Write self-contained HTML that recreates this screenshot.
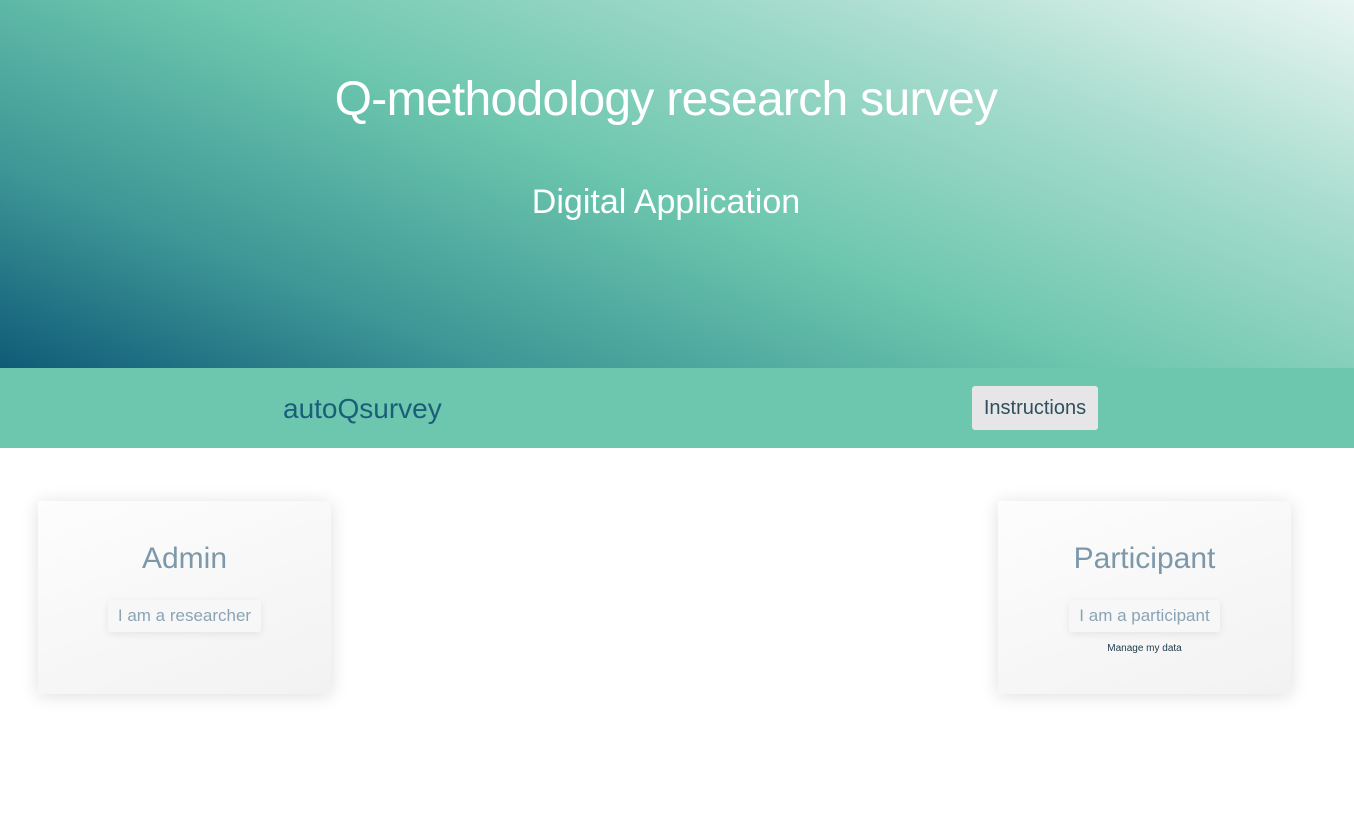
<!DOCTYPE html>
<html><head><style>
body{margin:0;width:1354px;height:827px;background:#fff;font-family:"Liberation Sans",sans-serif;overflow:hidden;position:relative}
.hero{position:absolute;left:0;top:0;width:1354px;height:368px;background:linear-gradient(22deg,#0f5b78 0%,#3e9696 22%,#6cc6ad 48%,#a6dccd 75%,#e9f5f2 100%)}
.t1{position:absolute;top:72px;left:0;width:1332px;text-align:center;color:#fff;font-size:48px;font-weight:300;letter-spacing:-0.7px}
.t2{position:absolute;top:183px;left:0;width:1332px;text-align:center;color:#fff;font-size:34px;font-weight:300}
.nav{position:absolute;top:368px;left:0;width:1354px;height:80px;background:#6dc6ae}
.brand{position:absolute;left:283px;top:25px;font-size:28px;color:#1a5f78}
.btn{position:absolute;left:972px;top:18px;width:126px;height:44px;background:#e6e6e9;border-radius:3px;color:#2f4f5a;font-size:20px;line-height:44px;text-align:center}
.card{position:absolute;top:501px;width:293px;height:193px;background:linear-gradient(160deg,#fdfdfd,#f2f2f2);box-shadow:0 2px 18px rgba(0,0,0,.13);border-radius:2px;text-align:center}
.card h2{margin:41px 0 0;font-size:30px;font-weight:300;color:#7c98aa}
.card .b{display:inline-block;margin-top:24px;padding:6px 10px;background:#f7f7f7;box-shadow:0 2px 8px rgba(0,0,0,.08);border-radius:3px;color:#8aa4b6;font-size:17px}
.card .m{font-size:10px;color:#1d3a4a;margin-top:11px}
</style></head><body>
<div class="hero"><div class="t1">Q-methodology research survey</div><div class="t2">Digital Application</div></div>
<div class="nav"><div class="brand">autoQsurvey</div><div class="btn">Instructions</div></div>
<div class="card" style="left:38px"><h2>Admin</h2><div class="b">I am a researcher</div></div>
<div class="card" style="left:998px"><h2>Participant</h2><div class="b">I am a participant</div><div class="m">Manage my data</div></div>
</body></html>
